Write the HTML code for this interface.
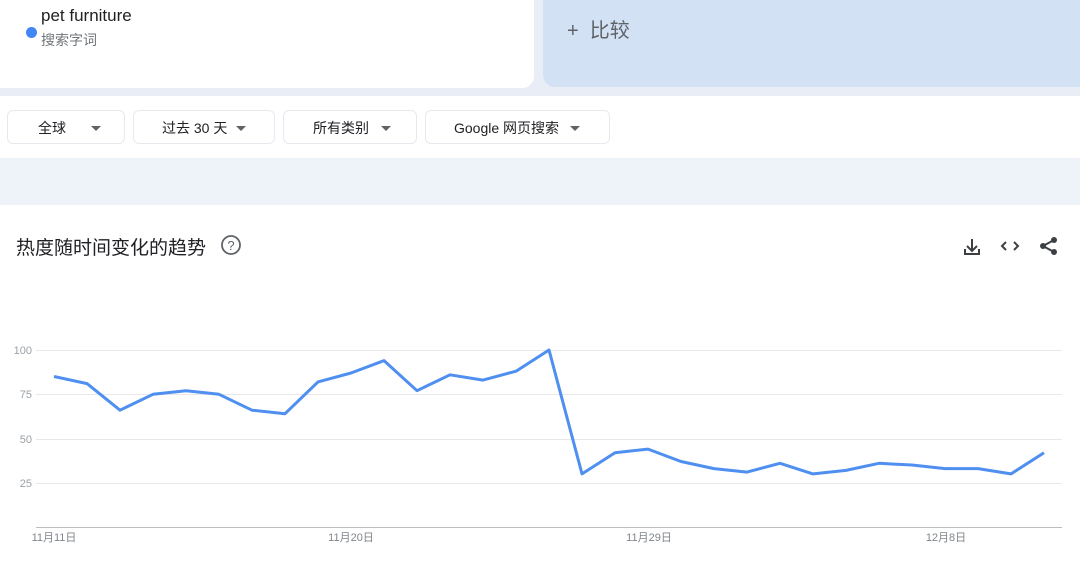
<!DOCTYPE html>
<html><head><meta charset="utf-8"><style>
*{margin:0;padding:0;box-sizing:border-box}
body{width:1080px;height:561px;overflow:hidden;background:#e9eef6;font-family:"Liberation Sans","Noto Sans CJK SC",sans-serif;position:relative}
.a{position:absolute}
.chip{position:absolute;top:110px;height:34px;background:#fff;border:1px solid #e6e9ee;border-radius:6px;font-size:14px;color:#202124;line-height:34px}
.chip i{position:absolute;top:15px;width:0;height:0;border-left:5px solid transparent;border-right:5px solid transparent;border-top:5px solid #5f6368}
</style></head><body>
<div class="a" style="left:0;top:0;width:534px;height:88px;background:#fff;border-bottom-right-radius:12px"></div>
<div class="a" style="left:26px;top:27px;width:11px;height:11px;border-radius:50%;background:#4285f4"></div>
<div class="a" style="left:41px;top:6px;font-size:17px;color:#202124">pet furniture</div>
<div class="a" style="left:41px;top:30px;font-size:14px;color:#70757a">搜索字词</div>
<div class="a" style="left:543px;top:0;width:537px;height:87px;background:#d3e1f5;border-bottom-left-radius:12px"></div>
<div class="a" style="left:567px;top:14px;font-size:20px;color:#5f6368">+&nbsp;&nbsp;比较</div>
<div class="a" style="left:0;top:96px;width:1080px;height:62px;background:#fff"></div>
<div class="chip" style="left:7px;width:118px"><span style="position:absolute;left:30px">全球</span><i style="left:83px"></i></div>
<div class="chip" style="left:133px;width:142px"><span style="position:absolute;left:28px">过去 30 天</span><i style="left:102px"></i></div>
<div class="chip" style="left:283px;width:134px"><span style="position:absolute;left:29px">所有类别</span><i style="left:97px"></i></div>
<div class="chip" style="left:425px;width:185px"><span style="position:absolute;left:28px">Google 网页搜索</span><i style="left:144px"></i></div>
<div class="a" style="left:0;top:158px;width:1080px;height:47px;background:#eef2f9"></div>
<div class="a" style="left:0;top:205px;width:1080px;height:356px;background:#fff"></div>
<div class="a" style="left:16px;top:233px;font-size:19px;color:#202124">热度随时间变化的趋势</div>
<svg class="a" style="left:0;top:0" width="1080" height="561">
<circle cx="231" cy="245" r="9" fill="none" stroke="#5f6368" stroke-width="1.8"/>
<text x="231" y="250" font-size="13" text-anchor="middle" fill="#5f6368" font-family="Liberation Sans">?</text>
<g stroke="#3c4043" stroke-width="2" fill="none">
<path d="M972 239v12M967 246l5 5 5-5M965 249v5h14v-5"/>
<path d="M1006 242l-4 4 4 4M1014 242l4 4-4 4"/>
<path d="M1054 240l-11 6 11 6"/>
</g>
<g fill="#3c4043"><circle cx="1054" cy="240" r="3"/><circle cx="1043" cy="246" r="3"/><circle cx="1054" cy="252" r="3"/></g>
<g stroke="#e8e8e8" stroke-width="1"><path d="M36 350.5H1062M36 394.5H1062M36 439.5H1062M36 483.5H1062"/></g>
<path d="M36 527.5H1062" stroke="#bdbdbd"/>
<g font-size="11" fill="#9aa0a6" text-anchor="end" font-family="Liberation Sans"><text x="32" y="354">100</text><text x="32" y="398">75</text><text x="32" y="443">50</text><text x="32" y="487">25</text></g>
<g font-size="11" fill="#80868b" text-anchor="middle" font-family="Liberation Sans,Noto Sans CJK SC"><text x="54" y="541">11月11日</text><text x="351" y="541">11月20日</text><text x="649" y="541">11月29日</text><text x="946" y="541">12月8日</text></g>
<polyline fill="none" stroke="#4f8ff0" stroke-width="3" stroke-linejoin="round" points="54,376.5 87,383.6 120,410.2 153,394.3 186,390.7 219,394.3 252,410.2 285,413.7 318,381.9 351,373 384,360.6 417,390.7 450,374.8 483,380.1 516,371.2 549,350 582,473.9 615,452.7 648,449.1 681,461.5 714,468.6 747,472.1 780,463.3 813,473.9 846,470.4 879,463.3 912,465 945,468.6 978,468.6 1011,473.9 1044,452.7"/>
</svg>
</body></html>
